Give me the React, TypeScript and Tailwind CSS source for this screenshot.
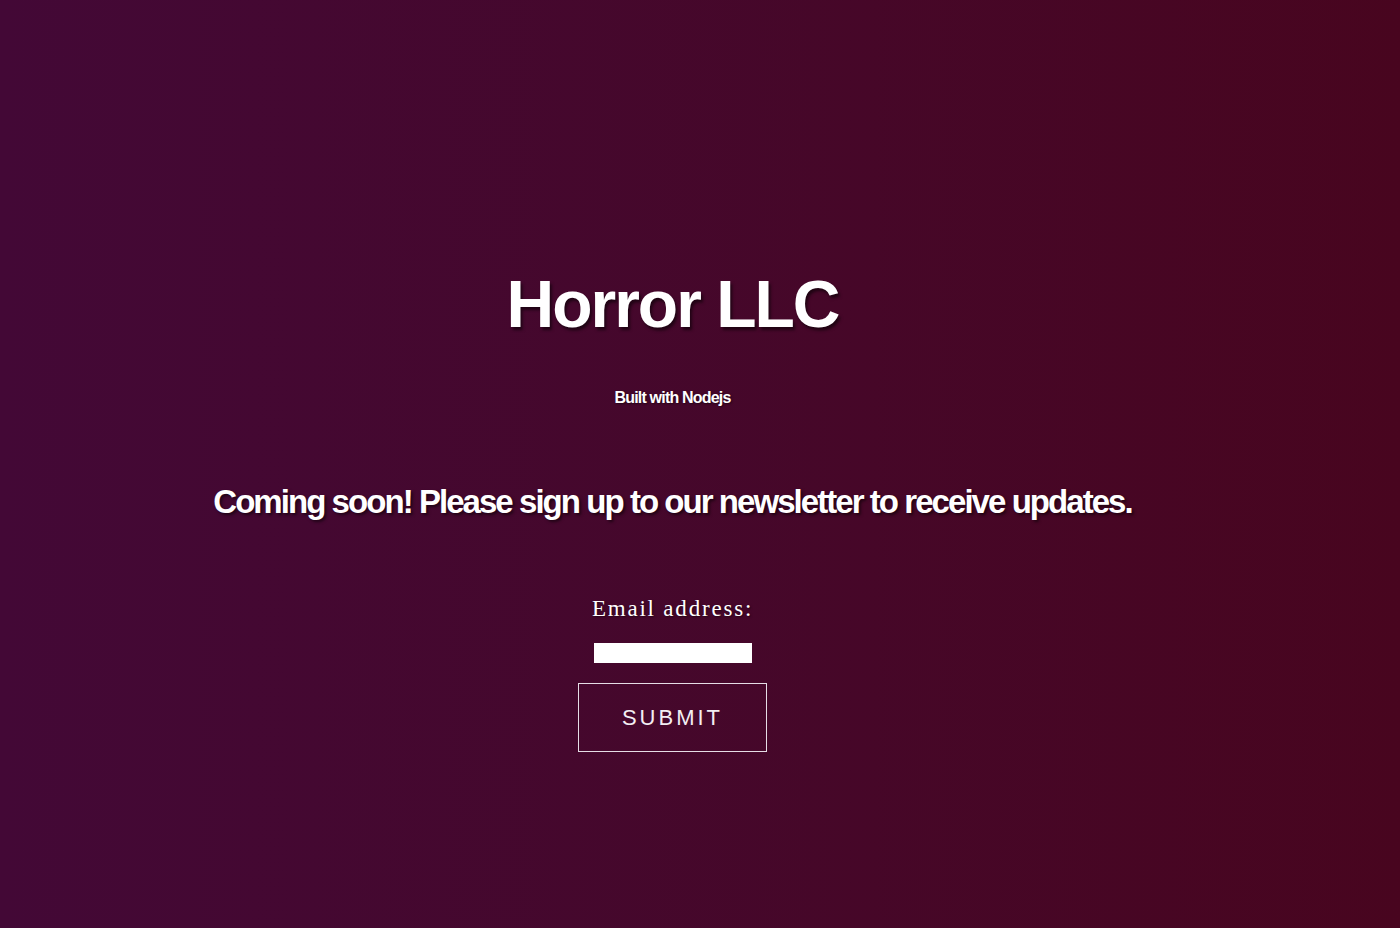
export default function App() {
  return (
    <div className="h-[928px] w-full bg-gradient-to-r from-[#430836] to-[#48051f] flex flex-col items-center pr-[55px] text-white font-['Liberation_Sans',Arial,sans-serif]">
      <h1 className="mt-[271px] text-[66px] leading-none font-bold tracking-[-2px] [text-shadow:2px_3px_3px_rgba(0,0,0,0.55)]">
        Horror LLC
      </h1>
      <p className="mt-[53px] text-[16px] leading-none font-bold tracking-[-0.8px] [text-shadow:1px_1px_2px_rgba(0,0,0,0.5)]">
        Built with Nodejs
      </p>
      <h2 className="mt-[79px] text-[33px] leading-none font-bold tracking-[-1.95px] [text-shadow:2px_2px_3px_rgba(0,0,0,0.55)]">
        Coming soon! Please sign up to our newsletter to receive updates.
      </h2>
      <form className="flex flex-col items-center" onSubmit={(e) => e.preventDefault()}>
        <label
          htmlFor="email"
          className="mt-[79px] text-[23px] leading-none tracking-[1.8px] font-['Liberation_Serif','Times_New_Roman',serif] [text-shadow:1px_1px_2px_rgba(0,0,0,0.5)]"
        >
          Email address:
        </label>
        <input
          id="email"
          type="email"
          className="mt-[23px] w-[158px] h-[20px] bg-white border-0 outline-none text-black text-sm px-1"
        />
        <button
          type="submit"
          className="mt-[20px] w-[189px] h-[69px] border border-[#e6dde6] text-[22px] tracking-[3px] font-normal text-[#f3eef3]"
        >
          SUBMIT
        </button>
      </form>
    </div>
  );
}
